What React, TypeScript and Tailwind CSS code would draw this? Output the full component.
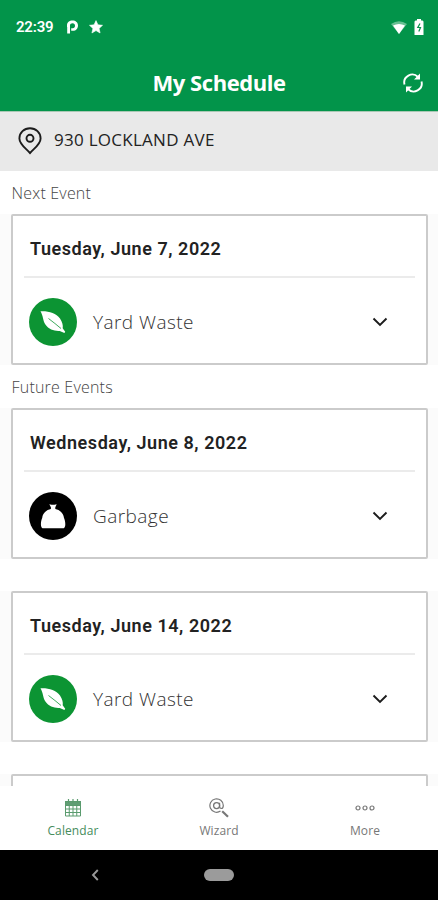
function Leaf() {
  return (
    <svg viewBox="0 0 48 48" className="h-12 w-12 shrink-0">
      <circle cx="24" cy="24" r="24" fill="#0c9433" />
      <path d="M11.500 13.200c8-.4 15.500 1.600 19.500 7.300 2.400 3.600 3.200 7 2.700 9.800l2.500 3.500-.8 1.300-4.700-2.200c-5 .4-11-1.300-14.300-6.300-2.600-4-2.200-9-4.900-13.400z" fill="#fff" />
      <path d="M19.500 20.500c4.500 3 8.500 7 12.500 10" fill="none" stroke="#0c9433" strokeWidth="0.8" />
    </svg>
  );
}

function Bag() {
  return (
    <svg viewBox="0 0 48 48" className="h-12 w-12 shrink-0">
      <circle cx="24" cy="24" r="24" fill="#000" />
      <path d="M20.300 12.200l2.200.6h3l2.200-.6-1.400 3v1.900c4.600 1 8 4 8.700 8.800.5 1.200 1.300 3.500 1.300 6.400 0 2-.6 3.500-1.600 4H13.500c-1-.5-1.600-2-1.600-4 0-2.900.8-5.200 1.300-6.400.7-4.800 4.100-7.800 8.700-8.800v-1.900z" fill="#fff" />
    </svg>
  );
}

function EventCard({ date, name, kind }: { date?: string; name?: string; kind?: "leaf" | "bag" }) {
  return (
    <div className="shrink-0 bg-[#fbfbfb] pl-[11px] pr-[10px]">
      <section className="h-[151px] rounded-[2px] border-2 border-[#cbcbcb] bg-white">
        {date && (
          <>
            <h2 className="mx-[11px] flex h-[62px] items-center border-b-2 border-[#ebebeb] pl-[6px] pt-[5px] font-[Roboto] text-[18px] font-semibold tracking-[0.55px] text-[#222]">
              {date}
            </h2>
            <div className="flex h-[87px] items-center pl-4 pr-[38px]">
              {kind === "leaf" ? <Leaf /> : <Bag />}
              <span className="ml-4 grow pt-px text-[19px] font-light tracking-[0.45px] text-[#333]">{name}</span>
              <svg viewBox="0 0 16 10" className="h-[10px] w-4">
                <path d="M1.500 1.500L8 8l6.500-6.500" fill="none" stroke="#1c1c1c" strokeWidth="1.900" />
              </svg>
            </div>
          </>
        )}
      </section>
    </div>
  );
}

function CalendarIcon() {
  return (
    <svg viewBox="0 0 18 18" className="h-[18px] w-[18px]" fill="none" stroke="#5a9b6e">
      <path d="M1 2h16v4H1z" fill="#458c5c" stroke="none" opacity="0.85" />
      <path d="M1.500 2.500h15v14.500h-15zM1.500 6.500h15M1.500 10h15M1.500 13.500h15M5.250 6v11M9 6v11M12.750 6v11" />
      <path d="M4.500 0v4M9 0v4M13.500 0v4" strokeWidth="1.200" />
    </svg>
  );
}

function WizardIcon() {
  return (
    <svg viewBox="0 0 20 20" className="h-5 w-5" fill="none" stroke="#777">
      <path d="M11.500 13A6.700 6.700 0 1 1 14.300 7.500q0 3-2 3-1.700 0-1.700-2V4.800" strokeWidth="1.200" />
      <circle cx="7.600" cy="7.600" r="3" strokeWidth="1.300" />
      <path d="M13.200 13.200l5.800 5.600" strokeWidth="2.200" />
    </svg>
  );
}

function MoreIcon() {
  return (
    <svg viewBox="0 0 20 8" className="h-2 w-5" fill="none" stroke="#777" strokeWidth="1.200">
      <circle cx="3" cy="4" r="2" />
      <circle cx="10" cy="4" r="2" />
      <circle cx="17" cy="4" r="2" />
    </svg>
  );
}

export default function App() {
  return (
    <div className="flex h-[900px] w-[438px] flex-col overflow-hidden bg-white font-['Open_Sans',sans-serif]">
      <header className="h-[112px] shrink-0 border-b border-[#a9c8b4] bg-[#02944a] text-white">
        <div className="flex h-[54px] items-center pl-4 pr-[14px]">
          <span className="w-[51px] font-[Roboto] text-[15px] font-semibold tracking-[-0.2px]">22:39</span>
          <svg viewBox="0 0 11 14" className="h-[14px] w-[11px]">
            <path d="M1.600 13.500V6.500" fill="none" stroke="#fff" strokeWidth="2.800" />
            <path d="M0 5.500C0 2 2.300.5 5.500.5S11 2.500 11 5.500s-2 5.300-5 5.300H4.200V8.200h1.600c1.400 0 2.200-1 2.200-2.500s-.9-2.400-2.400-2.400S3 4.200 3 5.500V7H0z" fill="#fff" />
          </svg>
          <svg viewBox="0 0 24 24" className="ml-[11px] h-[14px] w-[14px]">
            <path d="M12 1l3.300 7.300 7.900.8-5.900 5.300 1.700 7.900-7-4.100-7 4.100 1.700-7.900L.8 9.100l7.900-.8z" fill="#fff" stroke="#fff" strokeWidth="1" />
          </svg>
          <div className="grow" />
          <svg viewBox="0 0 16 13" className="h-[13px] w-4">
            <path d="M0 3Q8-2.500 16 3L8 13z" fill="#fff" opacity="0.4" />
            <path d="M2 4.500q6-3 12 0L8 13z" fill="#fff" />
          </svg>
          <svg viewBox="0 0 10 16" className="ml-[7px] h-4 w-[10px]">
            <path d="M3 0h4v1.500h1.500l1 1V16h-9V2.500l1-1H3z" fill="#fff" />
            <path d="M6 4.500L3.800 8.500h2.700L4.800 12.500" fill="none" stroke="#02944a" strokeWidth="1.200" />
          </svg>
        </div>
        <div className="flex h-[57px] items-center">
          <div className="w-[35px]" />
          <h1 className="grow text-center text-[22px] font-bold tracking-[-0.45px]">My Schedule</h1>
          <svg viewBox="0 0 20 20" className="mr-[15px] h-5 w-5" fill="none" stroke="#fff" strokeWidth="1.900">
            <path d="M1.500 11.500A8 8 0 0 1 15 4M18.500 8.500A8 8 0 0 1 5 16" />
            <path d="M17 .5V6.500H11zM3 19.500V13.500H9z" fill="#fff" stroke="none" />
          </svg>
        </div>
      </header>

      <div className="flex h-[59px] shrink-0 items-center bg-[#e9e9e9] pb-px pl-[18px]">
        <svg viewBox="0 0 24 28" className="h-7 w-6" fill="none" stroke="#1c1c1c" strokeWidth="1.900">
          <path d="M12 26C7 20.500 1.400 17 1.400 11.400a10.600 10.200 0 0 1 21.200 0C22.600 17 17 20.500 12 26z" />
          <circle cx="12" cy="11.300" r="3.500" />
        </svg>
        <span className="ml-3 pb-[3px] text-[17px] tracking-[0.27px] text-[#222]">930 LOCKLAND AVE</span>
      </div>

      <main className="flex min-h-0 grow flex-col overflow-hidden">
        <p className="flex h-[43px] shrink-0 items-center pl-[11.5px] pt-px text-[16px] font-light tracking-[0.2px] text-[#444]">Next Event</p>
        <EventCard date="Tuesday, June 7, 2022" name="Yard Waste" kind="leaf" />
        <p className="flex h-[43px] shrink-0 items-center pl-[11.5px] text-[16px] font-light tracking-[0.2px] text-[#444]">Future Events</p>
        <div className="flex flex-col gap-8">
          <EventCard date="Wednesday, June 8, 2022" name="Garbage" kind="bag" />
          <EventCard date="Tuesday, June 14, 2022" name="Yard Waste" kind="leaf" />
          <EventCard />
        </div>
      </main>

      <nav className="grid h-16 shrink-0 grid-cols-3 bg-white text-[12px] text-[#777]">
        <div className="flex flex-col items-center pt-3 text-[#458c5c]">
          <div className="flex h-5 items-center"><CalendarIcon /></div>
          <span className="mt-1 tracking-[0.1px]">Calendar</span>
        </div>
        <div className="flex flex-col items-center pt-3">
          <div className="flex h-5 items-center"><WizardIcon /></div>
          <span className="mt-1 tracking-[0.1px]">Wizard</span>
        </div>
        <div className="flex flex-col items-center pt-3">
          <div className="flex h-5 items-center"><MoreIcon /></div>
          <span className="mt-1 tracking-[0.1px]">More</span>
        </div>
      </nav>

      <footer className="grid h-[50px] shrink-0 grid-cols-[190px_58px_190px] items-center justify-items-center bg-black">
        <svg viewBox="0 0 8 12" className="h-3 w-2">
          <path d="M6.800 1L2 6l4.800 5" fill="none" stroke="#999" strokeWidth="1.900" />
        </svg>
        <div className="h-3 w-[30px] rounded-full bg-[#9b9b9b]" />
      </footer>
    </div>
  );
}
